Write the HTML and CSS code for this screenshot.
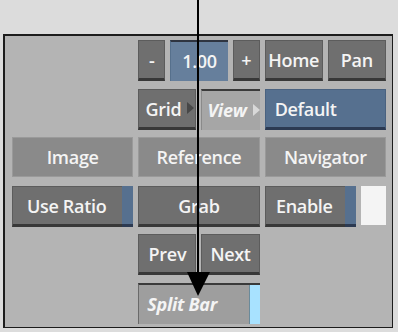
FILE: index.html
```html
<!DOCTYPE html>
<html>
<head>
<meta charset="utf-8">
<link rel="stylesheet" href="styles.css">
</head>
<body>
<div class="panel">
  <div class="grid">
    <div class="cell c34 trio">
      <div class="btn small">-</div>
      <div class="field">1.00</div>
      <div class="btn small">+</div>
    </div>
    <div class="btn c5">Home</div>
    <div class="btn c6">Pan</div>

    <div class="btn c3 grid-btn">Grid<span class="tri dark"></span></div>
    <div class="vfield c4">View<span class="tri light"></span></div>
    <div class="btn blue c56">Default</div>

    <div class="flat c12">Image</div>
    <div class="flat c34">Reference</div>
    <div class="flat c56">Navigator</div>

    <div class="btn c12 strip-btn">Use Ratio<span class="strip"></span></div>
    <div class="btn c34">Grab</div>
    <div class="cell c56 enable-row">
      <div class="btn strip-btn grow">Enable<span class="strip"></span></div>
      <div class="swatch"></div>
    </div>

    <div class="btn c3">Prev</div>
    <div class="btn c4">Next</div>

    <div class="sfield c34">Split Bar<span class="lstrip"></span></div>
  </div>
</div>
<svg class="pointer" width="398" height="332" viewBox="0 0 398 332">
  <rect x="197" y="0" width="2" height="276" fill="#000"/>
  <polygon points="187,272 210,272 198,296" fill="#000"/>
</svg>
</body>
</html>
```
FILE: styles.css
```css
html, body {
  margin: 0;
  padding: 0;
}
body {
  background: #dcdcdc;
  width: 398px;
  height: 332px;
  overflow: hidden;
  position: relative;
  font-family: "Open Sans", "Noto Sans", sans-serif;
}
.panel {
  margin: 34px 0 0 3px;
  width: 390px;
  height: 294px;
  box-sizing: border-box;
  background: #b4b4b4;
  border: 1px solid #1c1c1c;
  border-left-width: 2px;
  border-top-width: 2px;
  padding: 4px 5px 0 7px;
}
.grid {
  display: grid;
  grid-template-columns: repeat(6, 58.17px);
  column-gap: 5px;
  grid-auto-rows: 41px;
  row-gap: 7.6px;
}
.c12 { grid-column: 1 / 3; }
.c34 { grid-column: 3 / 5; }
.c56 { grid-column: 5 / 7; }
.c3 { grid-column: 3; }
.c4 { grid-column: 4; }
.c5 { grid-column: 5; }
.c6 { grid-column: 6; }

.cell { display: flex; gap: 5px; min-width: 0; }

.btn, .flat, .field, .vfield, .sfield {
  box-sizing: border-box;
  display: flex;
  align-items: center;
  justify-content: center;
  color: #f4f4f4;
  font-size: 18px;
  font-weight: 600;
  letter-spacing: -0.3px;
  position: relative;
  white-space: nowrap;
}
.btn {
  height: 41px;
  background: #6f6f6f;
  border: 1px solid #5c5c5c;
  border-bottom: 3px solid #383838;
  padding-top: 1px;
}
.btn.small { width: 27px; flex: none; }
.btn.blue {
  background: #56708f;
  border-color: #4a6280;
  border-bottom-color: #2c3a52;
  justify-content: flex-start;
  padding-left: 9px;
}
.trio .field { flex: 1; }
.field {
  height: 41px;
  background: #667f9c;
  border-top: 2px solid #2e3440;
  border-left: 1px solid #56708c;
  padding-bottom: 1px;
}
.vfield {
  height: 41px;
  background: #a6a6a6;
  border-top: 2px solid #3a3a3a;
  border-left: 1px solid #8a8a8a;
  font-style: italic;
  font-weight: 700;
  padding-right: 8px;
}
.sfield {
  height: 41px;
  background: #9e9e9e;
  border-top: 2px solid #3a3a3a;
  border-left: 1px solid #6a6a6a;
  font-style: italic;
  font-weight: 700;
  justify-content: flex-start;
  padding-left: 8px;
}
.flat {
  height: 40px;
  background: #8a8a8a;
  border: 1px solid #9a9a9a;
}
.tri {
  position: absolute;
  right: 1px;
  top: 50%;
  margin-top: -6px;
  width: 0;
  height: 0;
  border-top: 6px solid transparent;
  border-bottom: 6px solid transparent;
  border-left: 7px solid #474747;
}
.tri.light { border-left-color: #d8d8d8; right: 0; }
.grid-btn { padding-right: 8px; }
.strip-btn { padding-right: 12px; }
.strip {
  position: absolute;
  right: -1px;
  top: -1px;
  bottom: -3px;
  width: 11px;
  background: #56708f;
  border-bottom: 3px solid #2c3a52;
  box-sizing: border-box;
}
.lstrip {
  position: absolute;
  right: 0;
  top: 0;
  bottom: 0;
  width: 11px;
  background: #a8e2ff;
  border-left: 1px solid #6a8a9a;
  box-sizing: border-box;
}
.grow { flex: 1; }
.enable-row { align-items: flex-start; }
.swatch {
  width: 25px;
  height: 39px;
  flex: none;
  background: #f4f4f4;
}
.pointer {
  position: absolute;
  left: 0;
  top: 0;
  pointer-events: none;
}
```
